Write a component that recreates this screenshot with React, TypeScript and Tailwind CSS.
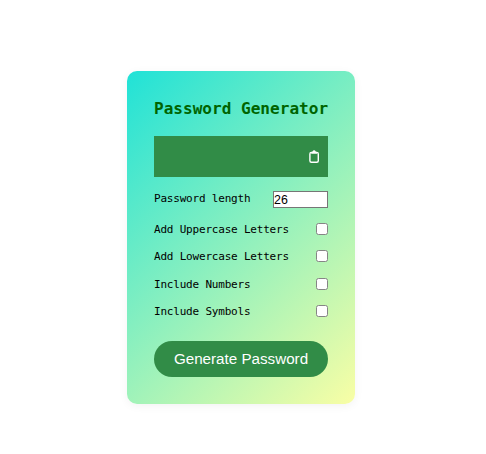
const options = [
  "Add Uppercase Letters",
  "Add Lowercase Letters",
  "Include Numbers",
  "Include Symbols",
];

function ClipboardIcon() {
  return (
    <svg width="12" height="14" viewBox="0 0 12 14" fill="none" aria-hidden="true">
      <rect x="1.9" y="2.4" width="8.4" height="9.9" rx="1.5" stroke="#fff" strokeWidth="1.4" />
      <path d="M3.2 3.8V2.2L4.6 1.4C4.8 .7 5.3 .3 6.1 .3S7.4 .7 7.6 1.4L9 2.2V3.8Z" fill="#fff" />
    </svg>
  );
}

export default function App() {
  return (
    <div className="flex h-[454px] w-[486px] items-start bg-white pt-[71px] pl-[127px] font-['DejaVu_Sans_Mono',monospace]">
      <div className="h-[333px] w-[228px] rounded-[10px] bg-[linear-gradient(135deg,#20e2d7,#f9fea5)] px-[27px] pt-[27px] shadow-[0_2px_10px_rgba(0,0,0,0.05)]">
        <h2 className="h-[38px] text-[16.07px] leading-[21px] font-bold whitespace-nowrap text-[#006400]">
          Password Generator
        </h2>
        <div className="flex h-[41px] items-center justify-end bg-[#318c47] pr-2">
          <button className="block" aria-label="Copy">
            <ClipboardIcon />
          </button>
        </div>
        <div className="mt-3.5 flex h-[17px] items-center justify-between text-[11px] tracking-[-0.2px] text-black">
          <label htmlFor="length" className="relative -top-px leading-4">Password length</label>
          <input
            id="length"
            defaultValue="26"
            className="h-[17px] w-[55px] border border-[#767676] bg-white p-0 font-['Liberation_Sans',sans-serif] text-[12.4px] leading-[15px] tracking-normal outline-none"
          />
        </div>
        <div className="mt-[7.4px] flex flex-col text-[11px] tracking-[-0.2px] text-black">
          {options.map((label) => (
            <label key={label} className="flex h-[27.33px] items-center justify-between leading-4">
              <span className="pt-0.5 whitespace-nowrap">{label}</span>
              <input
                type="checkbox"
                className="h-[12px] w-[12px] appearance-none rounded-[2.5px] border border-[#858585] bg-white"
              />
            </label>
          ))}
        </div>
        <button className="mt-[16.6px] flex h-9 w-[174px] items-center justify-center rounded-full bg-[#318c47] font-['Liberation_Sans',sans-serif] text-[15.2px] whitespace-nowrap text-white">
          Generate Password
        </button>
      </div>
    </div>
  );
}
